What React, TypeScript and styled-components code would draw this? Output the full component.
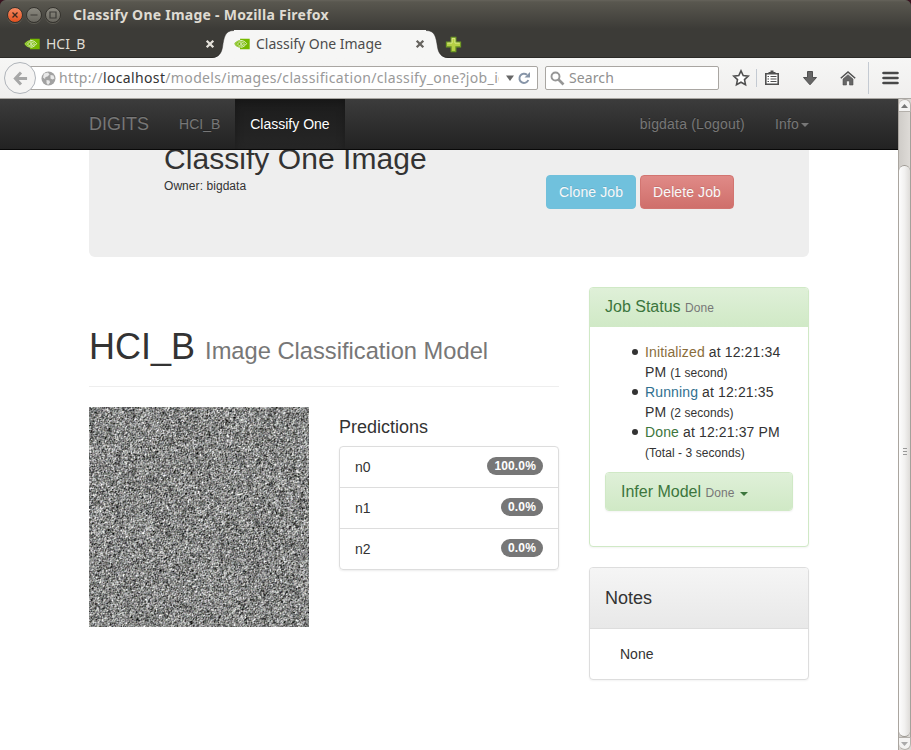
import React, { useEffect, useRef } from "react";
import styled, { createGlobalStyle, css } from "styled-components";

const Global = createGlobalStyle`
  * { box-sizing: border-box; }
  body { margin: 0; background: #3a1420; overflow: hidden; }
`;
const chromeFont = css`font-family: "Noto Sans", "Open Sans", sans-serif;`;

const Window = styled.div`
  width: 911px; height: 750px; display: flex; flex-direction: column; overflow: hidden;
  border-radius: 6px 6px 0 0; background: #3c3b37; font: 14px/20px "Liberation Sans", Arial, sans-serif; color: #333;
`;
const TitleBar = styled.header`
  ${chromeFont} flex: none; height: 30px; display: flex; align-items: center; gap: 3px; padding: 0 7px;
  background: linear-gradient(#66635b 0, #59574f 2px, #3c3b37 29px);
`;
const WindowButton = styled.span<{ $close?: boolean }>`
  width: 16px; height: 16px; border-radius: 50%; border: 1px solid #35332e; display: grid; place-items: center;
  background: ${p => (p.$close ? "linear-gradient(#f58a62, #e3511f)" : "linear-gradient(#8b8980, #69675f)")};
  box-shadow: 0 1px 0 #5d5b53;
  svg { display: block; }
`;
const WindowTitle = styled.h1`
  margin: 0 0 0 9px; font-size: 14px; line-height: 20px; font-weight: 700; color: #dfdbd2; letter-spacing: 0.25px; white-space: nowrap;
`;
const TabStrip = styled.div`
  ${chromeFont} flex: none; height: 28px; display: flex; background: #3c3b37; border-bottom: 1px solid #2b2a27;
`;
const Tab = styled.div<{ $active?: boolean }>`
  flex: none; display: flex; align-items: center; height: 28px; font-size: 14px; color: ${p => (p.$active ? "#4c4c4c" : "#dfdbd2")};
  width: ${p => (p.$active ? "192px" : "216px")}; padding: ${p => (p.$active ? "0 1px 0 0" : "0 1px 0 24px")};
  background: ${p => (p.$active ? "#f6f6f5" : "transparent")};
`;
const TabLabel = styled.span<{ $spacing: number }>`
  flex: 1; margin-left: 6px; line-height: 20px; white-space: nowrap; letter-spacing: ${p => p.$spacing}px;
`;
const TabEdge = styled.svg<{ $left?: boolean }>`
  flex: none; display: block; margin-left: ${p => (p.$left ? "-4px" : "0")};
`;
const NewTab = styled.div`display: flex; align-items: center; margin-left: -3px; height: 28px;`;

const Toolbar = styled.div`
  ${chromeFont} flex: none; height: 41px; display: flex; align-items: center; background: linear-gradient(#f6f6f5, #f0efee);
  border-bottom: 1px solid #a9a6a2; padding-left: 4px;
`;
const BackButton = styled.div`
  flex: none; width: 32px; height: 32px; border: 1px solid #b0b4ba; border-radius: 50%; display: grid; place-items: center;
  background: #f5f4f3; margin-right: -9px; z-index: 1;
`;
const Field = styled.div<{ $w: number; $left: number; $gap?: number }>`
  flex: none; width: ${p => p.$w}px; height: 24px; border: 1px solid #a9a6a2; border-radius: 2px; background: #fff;
  margin-right: ${p => p.$gap || 0}px;
  display: flex; align-items: center; padding-left: ${p => p.$left}px; color: #8f8f8f; font-size: 14px; line-height: 20px;
`;
const Url = styled.span`
  width: 440px; margin: 0 2px 0 3px; overflow: hidden; white-space: nowrap; letter-spacing: 0.35px; color: #999;
  b { font-weight: 400; color: #333; }
`;
const SearchText = styled.span`margin-left: 4px; letter-spacing: 0.1px;`;
const ToolIcons = styled.div`flex: 1; display: flex; align-items: center; padding-left: 13px;`;
const Separator = styled.i<{ $h: number; $l: number; $r: number }>`
  width: 1px; height: ${p => p.$h}px; margin: 0 ${p => p.$r}px 0 ${p => p.$l}px; background: #c4cad2;
`;
const IconSlot = styled.span<{ $gap?: number }>`display: flex; margin-right: ${p => p.$gap || 0}px;`;

const Viewport = styled.div`flex: 1; min-height: 0; display: flex; background: #fff;`;
const Page = styled.div`width: 898px; display: flex; flex-direction: column;`;
const Navbar = styled.nav`
  flex: none; height: 51px; padding: 0 89px; display: flex; align-items: stretch; border-bottom: 1px solid #080808;
  background: linear-gradient(#3c3c3c, #222); color: #777; line-height: 20px; text-shadow: 0 -1px 0 rgba(0,0,0,.25);
`;
const Brand = styled.span`font-size: 18px; padding: 15px 15px 0 0;`;
const NavItem = styled.span<{ $active?: boolean }>`
  padding: 15px 15px 0; white-space: nowrap;
  ${p => p.$active && css`color: #fff; background: linear-gradient(#1c1c1c, #262626); box-shadow: inset 0 3px 9px rgba(0,0,0,.25);`}
`;
const NavRight = styled.div`margin-left: auto; display: flex; margin-right: -15px; letter-spacing: 0.19px;`;
const Caret = styled.i`
  display: inline-block; border: 4px solid transparent; border-top-color: currentColor; border-bottom: 0; vertical-align: middle; margin-left: 2px;
`;
const Scroll = styled.main`flex: 1; min-height: 0; overflow: hidden; padding: 0 89px;`;
const Jumbotron = styled.section`
  margin-top: -40px; height: 147px; padding: 32px 75px 0; background: #eee; border-radius: 6px; display: flex; justify-content: space-between;
  h2 { margin: 0; font-size: 30px; line-height: 33px; font-weight: 400; white-space: nowrap; letter-spacing: 0.05px; }
`;
const Small = styled.small<{ $muted?: boolean }>`
  font-size: 12px; line-height: 1; letter-spacing: 0.06px; color: ${p => (p.$muted ? "#777" : "inherit")};
`;
const JumboButtons = styled.div`display: flex; gap: 4px; margin-top: 33px;`;
const Button = styled.button<{ $danger?: boolean }>`
  height: 34px; padding: 0 12px; font: inherit; color: #f8f8f8; border-radius: 4px; white-space: nowrap; text-shadow: 0 -1px 0 rgba(0,0,0,.1);
  letter-spacing: 0.1px;
  border: 1px solid ${p => (p.$danger ? "#d27571" : "#71c0db")};
  background: ${p => (p.$danger ? "linear-gradient(#e08a87, #cf6f6b)" : "#70c1dd")};
`;
const Columns = styled.div`display: grid; grid-template-columns: 470px 220px; gap: 30px; margin-top: 30px; align-items: start;`;
const ModelHeader = styled.div`
  margin-top: 40px; height: 60px; border-bottom: 1px solid #eee;
  h2 { margin: 0; font-size: 36px; line-height: 40px; font-weight: 400; white-space: nowrap; }
  small { font-size: 23.7px; color: #777; }
`;
const Results = styled.div`display: grid; grid-template-columns: 220px 220px; gap: 30px; margin-top: 20px;`;
const NoiseCanvas = styled.canvas`display: block; width: 220px; height: 220px;`;
const PredTitle = styled.h4`margin: 10px 0 9px; font-size: 18px; line-height: 20px; font-weight: 400;`;
const List = styled.ul`
  list-style: none; margin: 0; padding: 0; border: 1px solid #ddd; border-radius: 4px; box-shadow: 0 1px 2px rgba(0,0,0,.075);
`;
const Row = styled.li`
  height: 41px; padding: 0 15px; display: flex; align-items: center; justify-content: space-between;
  & + & { border-top: 1px solid #ddd; }
  &:first-child { height: 40px; }
`;
const Badge = styled.span`
  padding: 3px 7px; border-radius: 10px; background: #777; color: #fff; font-size: 12px; line-height: 12px; font-weight: 700;
  margin-top: -2px; letter-spacing: 0.15px;
`;
const Panel = styled.section<{ $green?: boolean; $h: number }>`
  height: ${p => p.$h}px; border: 1px solid ${p => (p.$green ? "#d0e9c6" : "#ddd")}; border-radius: 4px; overflow: hidden;
  box-shadow: 0 1px 2px rgba(0,0,0,.05); background: #fff; margin-bottom: 20px;
`;
const PanelHead = styled.div<{ $green?: boolean; $h: number }>`
  height: ${p => p.$h}px; padding: 0 15px; line-height: ${p => (p.$green ? 37 : p.$h - 1)}px; white-space: nowrap;
  font-size: ${p => (p.$green ? 16 : 18)}px; color: ${p => (p.$green ? "#3c763d" : "#333")};
  border-bottom: ${p => (p.$green ? 0 : 1)}px solid #ddd;
  background: ${p => (p.$green ? "linear-gradient(#dff0d8, #d0e9c6)" : "linear-gradient(#f5f5f5, #e8e8e8)")};
`;
const PanelBody = styled.div`padding: 15px;`;
const NoteText = styled.div`padding: 15px 30px;`;
const StatusList = styled.ul`
  list-style: none; margin: 0 0 10px; padding-left: 40px; letter-spacing: 0.13px;
  li::before {
    content: ""; display: inline-block; width: 6px; height: 6px; margin: 0 7px 0 -13px; border-radius: 50%; background: #333; vertical-align: 2px;
  }
`;
const State = styled.span<{ $c: string }>`color: ${p => p.$c};`;

const ScrollBar = styled.div`width: 13px; display: flex; flex-direction: column; background: #dad7d3; border-left: 1px solid #aaa59f;`;
const ScrollEnd = styled.div<{ $down?: boolean }>`
  height: 13px; flex: none; display: grid; place-items: center; background: #f4f3f2; border: 1px solid #b4b0ab; border-left: 0;
  border-radius: ${p => (p.$down ? "0 0 6px 6px" : "6px 6px 0 0")};
`;
const Track = styled.div`flex: 1; padding-top: 53px; border-right: 1px solid #a5a19b; display: flex; background: linear-gradient(90deg, #cfccc8, #dedbd7);`;
const Thumb = styled.div`
  flex: 1; border: 1px solid #9d9993; border-left: 0; border-right: 0; border-radius: 6px; display: flex; flex-direction: column; align-items: center; justify-content: center; gap: 2px;
  background: linear-gradient(90deg, #fdfdfd, #f2f1f0 50%, #dedcd9);
  i { width: 4px; height: 1px; background: #999; }
`;

const Nvidia = () => (
  <svg width="16" height="12" viewBox="0 0 16 12">
    <path d="M6 .8h9.700v10.400H6z" fill="#76b900" />
    <path d="M.3 5.800C2 3.400 4 2.200 7 2c3 .1 5 1.600 6.500 3.500C12 8.200 9.700 9.800 7 9.800 4 9.700 1.600 8.300.3 5.800z" fill="#76b900" />
    <path d="M6 2.300c3 0 5.200 1.500 6.600 3.300C11 8 9 9.300 6.500 9.300M6 4c2-.2 3.600.7 4.600 1.900C9.500 7.300 8.200 8 6.500 8 5 7.900 4 7 3.600 5.900 4.400 4.700 5.200 4.200 6 4M6.200 5.300c.9-.1 1.600.2 2.100.8-.6.6-1.200.7-2.100.6" fill="none" stroke="#fff" strokeOpacity=".9" strokeWidth=".85" />
    <path d="M1.500 5.900C2.700 4.200 4.200 3.100 6 2.800M1.500 5.900C2.600 7.800 4.200 8.900 6 9" fill="none" stroke="#fff" strokeOpacity=".6" strokeWidth=".7" />
  </svg>
);
const CloseX = ({ color }: { color: string }) => (
  <svg width="10" height="10" viewBox="0 0 10 10"><path d="M1.700 1.700l6.600 6.600M8.300 1.700L1.700 8.300" stroke={color} strokeWidth="2.300" /></svg>
);

/** Input picture of the classifier: seeded, nearly grey random grain. */
function Noise() {
  const ref = useRef<HTMLCanvasElement>(null);
  useEffect(() => {
    const ctx = ref.current?.getContext("2d");
    if (!ctx) return;
    const n = 220;
    let s = 90210;
    const rnd = () => {
      s = (s + 0x6d2b79f5) | 0;
      let t = Math.imul(s ^ (s >>> 15), 1 | s);
      t = (t + Math.imul(t ^ (t >>> 7), 61 | t)) ^ t;
      return ((t ^ (t >>> 14)) >>> 0) / 4294967296;
    };
    const gauss = () => rnd() + rnd() + rnd() + rnd() - 2;
    const base = Array.from({ length: (n + 1) * (n + 1) }, gauss);
    const img = ctx.createImageData(n, n);
    for (let y = 0; y < n; y++) {
      for (let x = 0; x < n; x++) {
        const i = y * (n + 1) + x;
        const g = base[i] * 0.72 + base[i + 1] * 0.3 + base[i + n + 1] * 0.3;
        const v = 134 + g * 78;
        const o = (y * n + x) * 4;
        img.data[o] = v + gauss() * 5;
        img.data[o + 1] = v + 1 + gauss() * 4;
        img.data[o + 2] = v + gauss() * 6;
        img.data[o + 3] = 255;
      }
    }
    ctx.putImageData(img, 0, 0);
  }, []);
  return <NoiseCanvas ref={ref} width={220} height={220} />;
}

const predictions = [["n0", "100.0%"], ["n1", "0.0%"], ["n2", "0.0%"]];

export default function App() {
  return (
    <>
      <Global />
      <Window>
        <TitleBar>
          <WindowButton $close><svg width="8" height="8"><path d="M1.500 1.500l5 5M6.500 1.500l-5 5" stroke="#3c2a20" strokeWidth="1.300" /></svg></WindowButton>
          <WindowButton><svg width="8" height="8"><path d="M.5 4h7" stroke="#3c3b37" strokeWidth="1.200" /></svg></WindowButton>
          <WindowButton><svg width="8" height="8"><path d="M1 1h6v6H1z" fill="none" stroke="#3c3b37" strokeWidth="1.200" /></svg></WindowButton>
          <WindowTitle>Classify One Image - Mozilla Firefox</WindowTitle>
        </TitleBar>
        <TabStrip>
          <Tab><Nvidia /><TabLabel $spacing={0}>HCI_B</TabLabel><CloseX color="#e4e1da" /></Tab>
          <TabEdge $left width="22" height="28" viewBox="0 0 22 28">
            <path d="M0 28C7 27.500 9.500 23 10.500 17 12 7 13 .5 22 .5V28z" fill="#f6f6f5" />
            <path d="M0 27.500C7 27 9.500 23 10.500 17 12 7 13 .5 22 .5" fill="none" stroke="#2b2a27" strokeOpacity=".5" />
          </TabEdge>
          <Tab $active><Nvidia /><TabLabel $spacing={-0.02}>Classify One Image</TabLabel><CloseX color="#66645f" /></Tab>
          <TabEdge width="22" height="28" viewBox="0 0 22 28">
            <path d="M22 28C15 27.500 12.500 23 11.500 17 10 7 9 .5 0 .5V28z" fill="#f6f6f5" />
            <path d="M22 27.500C15 27 12.500 23 11.500 17 10 7 9 .5 0 .5" fill="none" stroke="#2b2a27" strokeOpacity=".5" />
          </TabEdge>
          <NewTab>
            <svg width="17" height="17" viewBox="0 0 18 18"><path d="M6.500 1.500h5v5h5v5h-5v5h-5v-5h-5v-5h5z" fill="#b5cf45" stroke="#6f9a25" strokeWidth="1.200" /><path d="M7.500 7.500v-5h3v5h5M2.500 7.500h5" fill="none" stroke="#dcea8c" /></svg>
          </NewTab>
        </TabStrip>
        <Toolbar>
          <BackButton>
            <svg width="15" height="15" viewBox="0 0 16 16"><path d="M8.500 1.500L2.500 8l6 6.500M3 8h12" fill="none" stroke="#a7a7a7" strokeWidth="3.200" /></svg>
          </BackButton>
          <Field $w={511} $left={13} $gap={7}>
            <svg width="15" height="15" viewBox="0 0 15 15"><circle cx="7.500" cy="7.500" r="7" fill="#a2a2a2" /><path d="M3 2.500l4-1 1.500 2-2 2-2 .5-.5 2-2-1.500zM9.500 4l3 .5 1 3-2 1-2-1zM5.500 9l3 .5.5 2-2 2.500-1.500-2z" fill="#e9e9e9" /></svg>
            <Url>http://<b>localhost</b>/models/images/classification/classify_one?job_id</Url>
            <svg width="30" height="16" viewBox="0 0 30 16"><path d="M5 5.500h8l-4 5.500z" fill="#666" /><path d="M26 4.800A4.600 4.600 0 1 0 27.300 10" fill="none" stroke="#8795a8" strokeWidth="2" /><path d="M29 2v5.500h-5.500z" fill="#8795a8" /></svg>
          </Field>
          <Field $w={174} $left={4}>
            <svg width="15" height="15" viewBox="0 0 15 15"><circle cx="5.500" cy="5.500" r="4" fill="none" stroke="#969696" strokeWidth="1.900" /><path d="M8.500 8.500l5 5" stroke="#969696" strokeWidth="2.600" /></svg>
            <SearchText>Search</SearchText>
          </Field>
          <ToolIcons>
            <IconSlot><svg width="18" height="18" viewBox="0 0 18 18"><path d="M9 1.800l2.200 4.700 5.100.6-3.800 3.500 1 5.100L9 13.200l-4.500 2.500 1-5.100L1.700 7.100l5.100-.6z" fill="#fff" stroke="#505050" strokeWidth="1.600" /></svg></IconSlot>
            <Separator $h={18} $l={6} $r={7} />
            <IconSlot $gap={22}><svg width="16" height="16" viewBox="0 0 16 16"><path d="M1.800 3.800h12.400v10.400H1.800z" fill="#fff" stroke="#505050" strokeWidth="1.600" /><path d="M4.500 4V2H6.500V.5h3V2h2v2z" fill="#505050" /><path d="M3.500 6.500h1.500M6.500 6.500h6M3.500 9h1.500M6.500 9h6M3.500 11.500h1.500M6.500 11.500h6" stroke="#505050" strokeWidth="1.200" /></svg></IconSlot>
            <IconSlot $gap={22}><svg width="16" height="16" viewBox="0 0 16 16"><path d="M5.500 1.500h5v6h4L8 14.800 1.500 7.500h4z" fill="#666" stroke="#505050" /></svg></IconSlot>
            <IconSlot><svg width="16" height="16" viewBox="0 0 16 16"><path d="M.8 8.300L8 2l7.200 6.300" fill="none" stroke="#505050" strokeWidth="1.500" /><path d="M3 9l5-4.300L13 9v6H9.500v-4h-3v4H3z" fill="#666" stroke="#505050" strokeWidth=".6" /></svg></IconSlot>
            <Separator $h={32} $l={12} $r={13} />
            <svg width="17" height="14" viewBox="0 0 17 14"><path d="M1.500 2h14M1.500 7h14M1.500 12h14" stroke="#484848" strokeWidth="2.600" strokeLinecap="round" /></svg>
          </ToolIcons>
        </Toolbar>
        <Viewport>
          <Page>
            <Navbar>
              <Brand>DIGITS</Brand>
              <NavItem>HCI_B</NavItem>
              <NavItem $active>Classify One</NavItem>
              <NavRight><NavItem>bigdata (Logout)</NavItem><NavItem>Info<Caret /></NavItem></NavRight>
            </Navbar>
            <Scroll>
              <Jumbotron>
                <div><h2>Classify One Image</h2><Small>Owner: bigdata</Small></div>
                <JumboButtons><Button>Clone Job</Button><Button $danger>Delete Job</Button></JumboButtons>
              </Jumbotron>
              <Columns>
                <div>
                  <ModelHeader><h2>HCI_B <small>Image Classification Model</small></h2></ModelHeader>
                  <Results>
                    <Noise />
                    <div>
                      <PredTitle>Predictions</PredTitle>
                      <List>{predictions.map(([n, v]) => <Row key={n}>{n}<Badge>{v}</Badge></Row>)}</List>
                    </div>
                  </Results>
                </div>
                <aside>
                  <Panel $green $h={260}>
                    <PanelHead $green $h={39}>Job Status <Small $muted>Done</Small></PanelHead>
                    <PanelBody>
                      <StatusList>
                        <li><State $c="#8a6d3b">Initialized</State> at 12:21:34 PM <Small>(1 second)</Small></li>
                        <li><State $c="#31708f">Running</State> at 12:21:35 PM <Small>(2 seconds)</Small></li>
                        <li><State $c="#3c763d">Done</State> at 12:21:37 PM <Small>(Total - 3 seconds)</Small></li>
                      </StatusList>
                      <Panel $green $h={39}>
                        <PanelHead $green $h={37}>Infer Model <Small $muted>Done <Caret style={undefined} as={GreenCaret} /></Small></PanelHead>
                      </Panel>
                    </PanelBody>
                  </Panel>
                  <Panel $h={113}>
                    <PanelHead $h={61}>Notes</PanelHead>
                    <NoteText>None</NoteText>
                  </Panel>
                </aside>
              </Columns>
            </Scroll>
          </Page>
          <ScrollBar>
            <ScrollEnd><svg width="7" height="4"><path d="M0 4h7L3.500 0z" fill="#777" /></svg></ScrollEnd>
            <Track><Thumb><i /><i /><i /></Thumb></Track>
            <ScrollEnd $down><svg width="7" height="4"><path d="M0 0h7L3.500 4z" fill="#aaa" /></svg></ScrollEnd>
          </ScrollBar>
        </Viewport>
      </Window>
    </>
  );
}

const GreenCaret = styled(Caret)`color: #3c763d;`;
